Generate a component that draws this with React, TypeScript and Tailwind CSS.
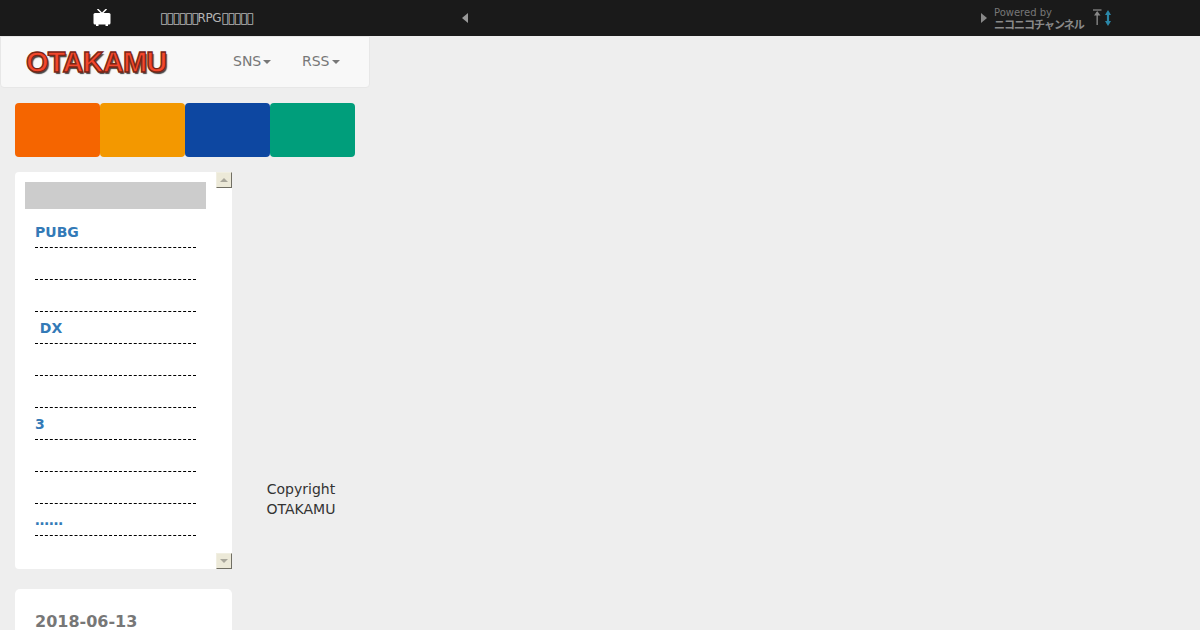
const items = ["PUBG", "", "", "\u00a0DX", "", "", "3", "", "", "……"];

function Tv() {
  return (
    <svg width="18" height="18" viewBox="0 0 18 18" fill="#fff">
      <path d="M4.5 0 L9 4.5 L13.5 0" fill="none" stroke="#fff" strokeWidth="1.5" />
      <rect x="0.5" y="4" width="17" height="11.5" rx="1.5" />
      <rect x="3" y="15" width="2.5" height="2" />
      <rect x="12.5" y="15" width="2.5" height="2" />
    </svg>
  );
}

function ScrollButton({ up }: { up: boolean }) {
  return (
    <div className="flex h-4 w-4 items-center justify-center border border-t-[#f1efe2] border-l-[#f1efe2] border-r-[#716f64] border-b-[#716f64] bg-[#ece9d8]">
      <div
        className={
          up
            ? "h-0 w-0 border-x-4 border-b-4 border-x-transparent border-b-[#a9a79c]"
            : "h-0 w-0 border-x-4 border-t-4 border-x-transparent border-t-[#a9a79c]"
        }
      />
    </div>
  );
}

function Caret() {
  return <span className="ml-0.5 inline-block h-0 w-0 border-x-4 border-t-4 border-x-transparent border-t-[#777777] align-middle" />;
}

export default function App() {
  return (
    <div className="h-[630px] overflow-hidden bg-[#eeeeee] font-['DejaVu_Sans',sans-serif] text-sm text-[#333333]">
      <header className="flex h-9 items-center bg-[#1a1a1a]">
        <div className="ml-[93px] flex w-[67px] items-center">
          <Tv />
        </div>
        <div className="flex w-[302px] items-center text-xs leading-none text-[#b5b5b5]">
          <span className="text-[15px] tracking-[-2px]">▯▯▯▯▯▯</span>
          <span className="tracking-[-0.4px]">RPG</span>
          <span className="text-[15px] tracking-[-2px]">▯▯▯▯▯</span>
        </div>
        <div className="h-0 w-0 border-y-[5px] border-l-0 border-r-[6px] border-y-transparent border-r-[#999999]" />
        <div className="ml-[513px] h-0 w-0 border-y-[5px] border-l-[6px] border-y-transparent border-l-[#888888]" />
        <div className="ml-[7px] mt-[2px] flex w-[99px] flex-col text-[10px] leading-[10px] text-[#777777]">
          <span>Powered by</span>
          <span className="w-[90px] whitespace-nowrap font-['Noto_Sans_CJK_JP',sans-serif] text-[11px] font-bold leading-[12px] tracking-[-1px] text-[#8a8a8a]">ニコニコチャンネル</span>
        </div>
        <svg width="20" height="18" viewBox="0 0 20 18" className="-ml-px">
          <path d="M1 1 H9.5 M5.2 3 V16" stroke="#777" strokeWidth="1.6" fill="none" />
          <path d="M2 6.5 L5.2 2 L8.5 6.5 Z" fill="#888" />
          <path d="M16 3 V15" stroke="#2b87a8" strokeWidth="2.2" fill="none" />
          <path d="M13 6 L16 1 L19 6 Z M13 12 L16 17 L19 12 Z" fill="#2b87a8" />
        </svg>
      </header>

      <nav className="flex h-[52px] w-[370px] items-center rounded-b border border-[#e7e7e7] bg-[#f8f8f8] pb-[2px]">
        <div className="ml-[25px] mt-[3px] w-[207px] font-['Liberation_Sans',sans-serif] text-[29px] font-black leading-none tracking-[-0.8px] text-[#f4472c] [-webkit-text-stroke:1.3px_#7a2515] [text-shadow:1.5px_1.5px_1px_#444]">
          OTAKAMU
        </div>
        <div className="w-[69px] text-[#777777]">
          SNS
          <Caret />
        </div>
        <div className="text-[#777777]">
          RSS
          <Caret />
        </div>
      </nav>

      <div className="ml-[15px] mt-[15px] flex">
        <div className="h-[54px] w-[85px] rounded bg-[#f56500]" />
        <div className="h-[54px] w-[85px] rounded bg-[#f39800]" />
        <div className="h-[54px] w-[85px] rounded bg-[#0d47a1]" />
        <div className="h-[54px] w-[85px] rounded bg-[#009e7b]" />
      </div>

      <div className="ml-[15px] mt-[15px] flex">
        <div className="w-[217px]">
          <div className="flex h-[397px] rounded-l bg-white">
            <div className="w-[201px] p-2.5">
              <div className="h-[27px] w-[181px] bg-[#cccccc]" />
              <ul className="mx-2.5 mt-[7px]">
                {items.map((t, i) => (
                  <li
                    key={i}
                    className="h-8 border-b border-dashed border-black pt-[6px] text-sm font-bold leading-5 text-[#337ab7]"
                  >
                    {t}
                  </li>
                ))}
              </ul>
            </div>
            <div className="flex w-4 flex-col justify-between">
              <ScrollButton up />
              <ScrollButton up={false} />
            </div>
          </div>
          <div className="mt-5 h-[60px] rounded-[5px] bg-white px-5 pt-[23px] text-base font-bold leading-5 text-[#777777]">
            2018-06-13
          </div>
        </div>
        <div className="w-[138px] pt-[307px] text-center leading-5 text-[#333333]">
          Copyright
          <br />
          OTAKAMU
        </div>
      </div>
    </div>
  );
}
